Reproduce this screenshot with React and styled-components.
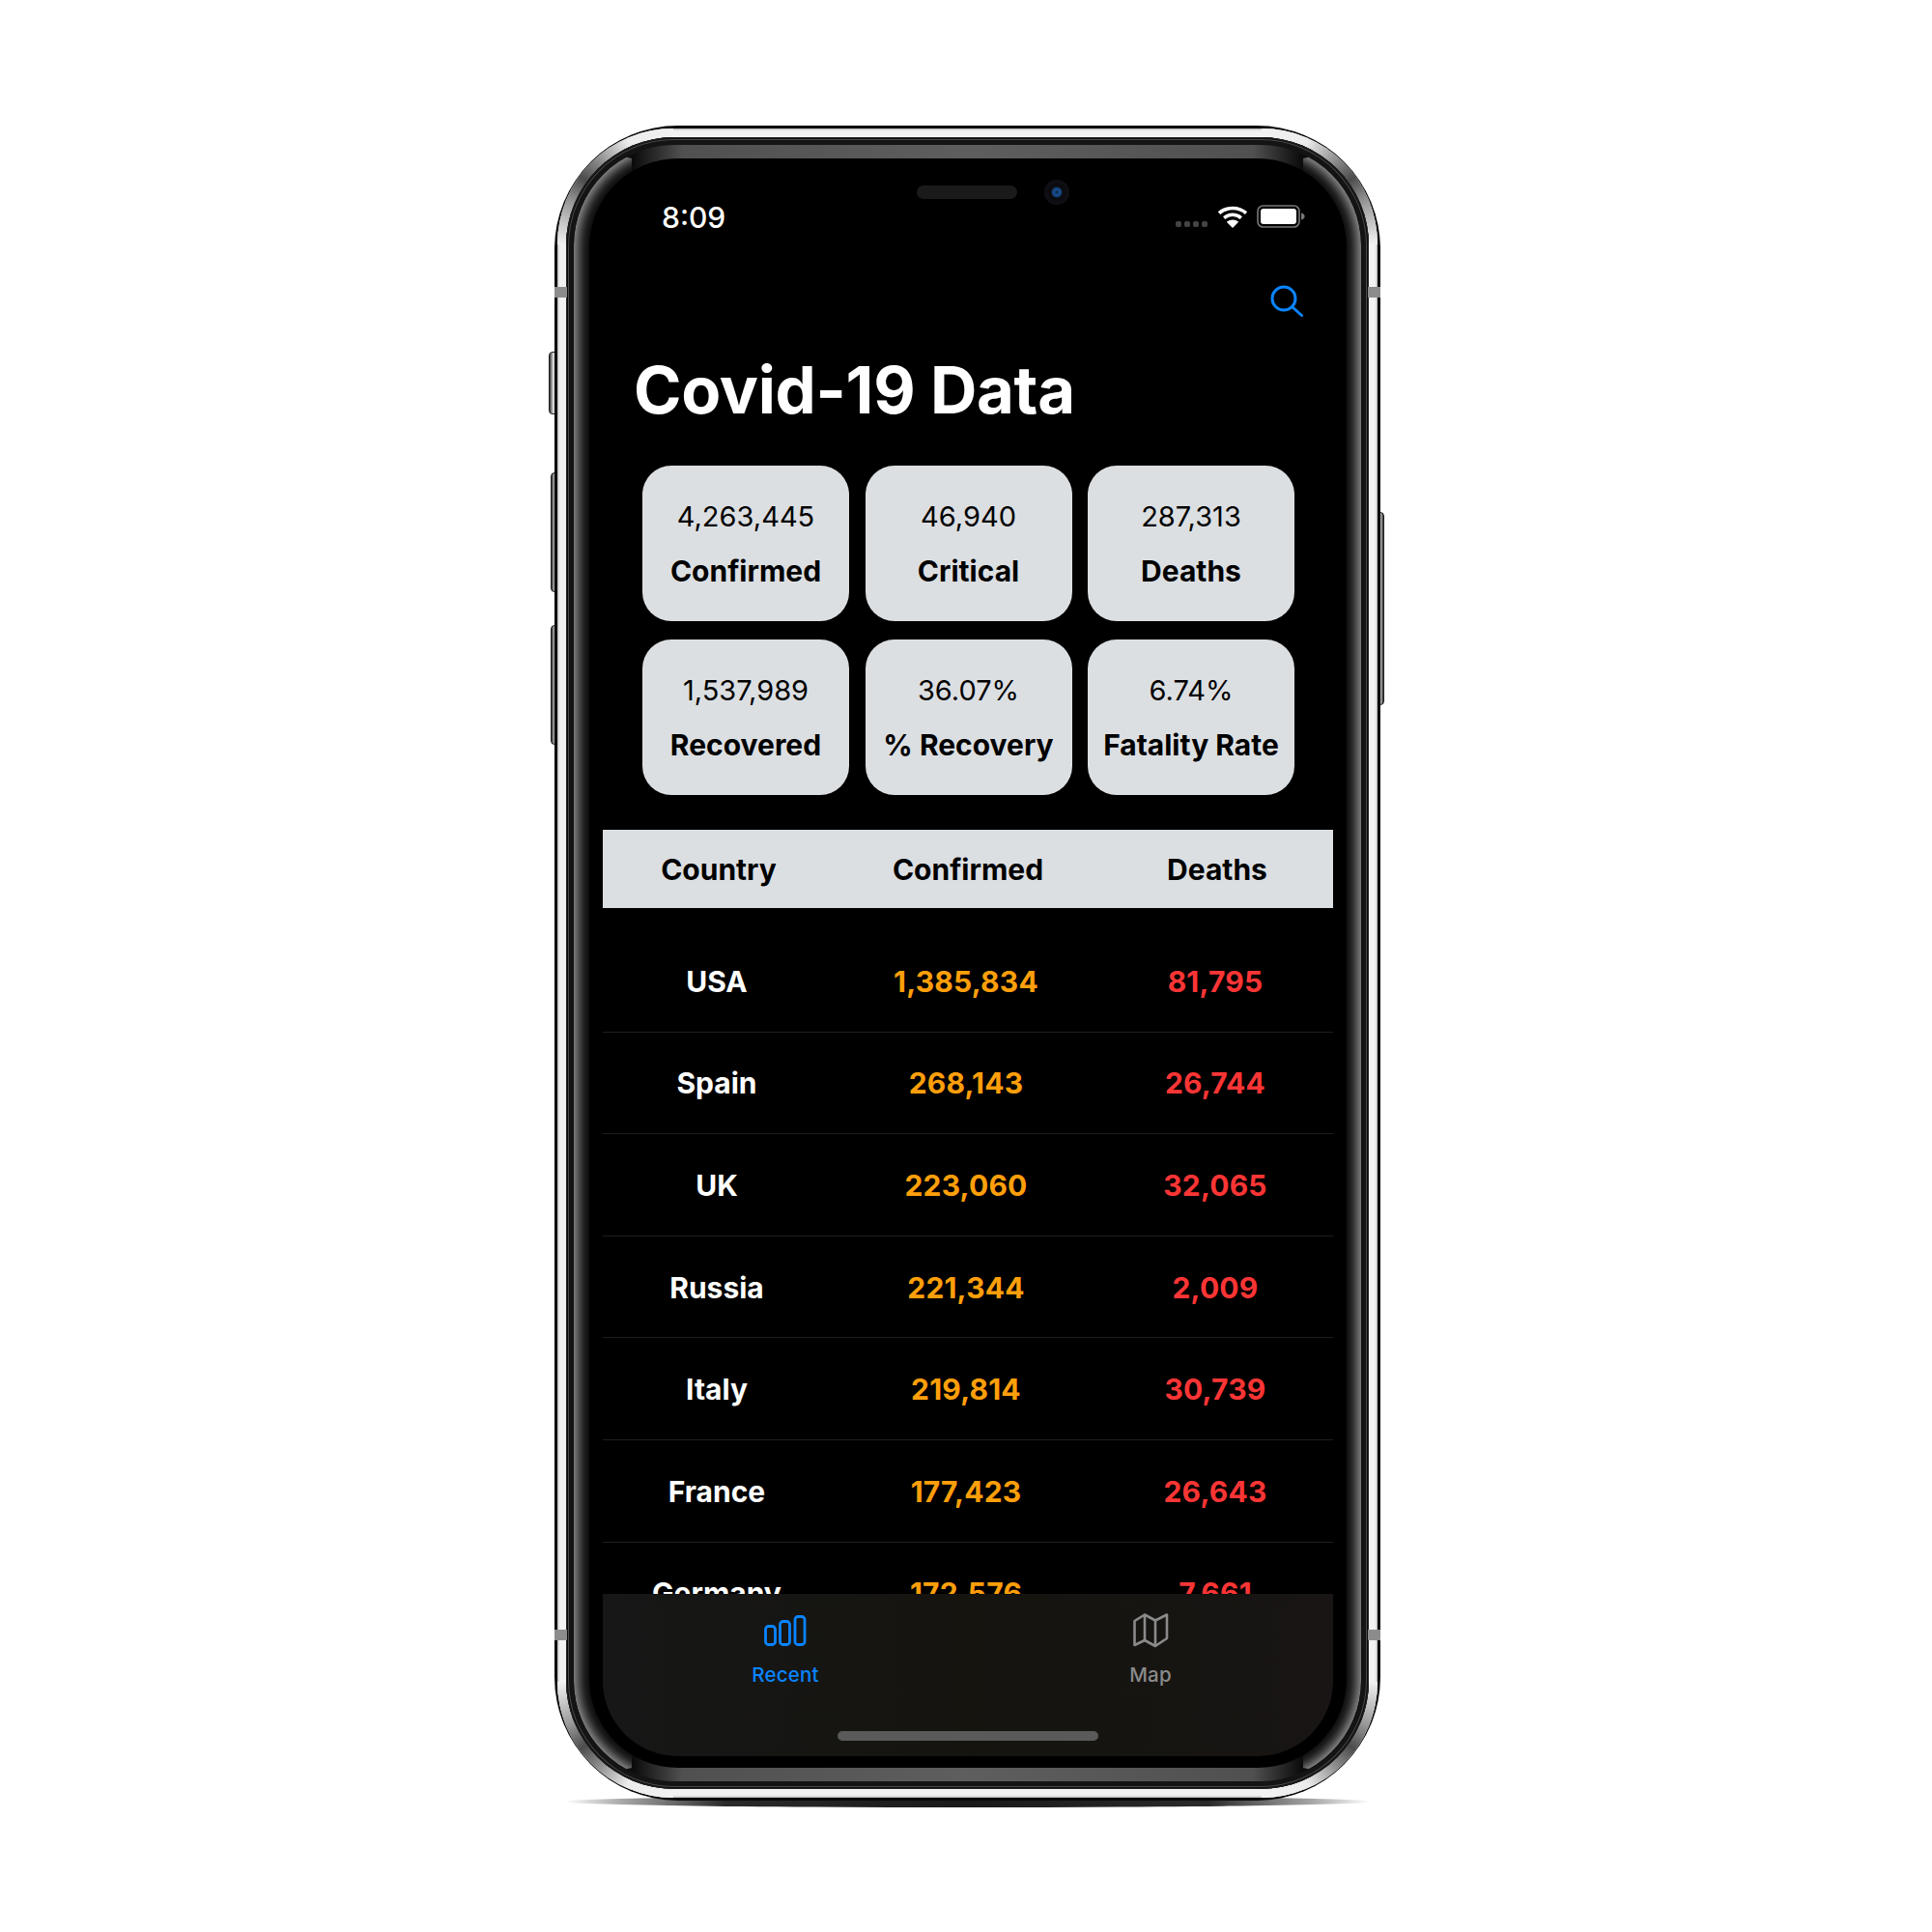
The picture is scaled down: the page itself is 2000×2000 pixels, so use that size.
import React from 'react'
import styled, { createGlobalStyle } from 'styled-components'

const GlobalStyle = createGlobalStyle`
    html, body {
        margin: 0;
        background: #fff;
    }
    body {
        font-family: Inter, 'Liberation Sans', sans-serif;
    }
`

const Page = styled.div`
    width: 2000px;
    height: 2000px;
    padding: 130px 0 0 574px;
    box-sizing: border-box;
`

const Device = styled.div`
    position: relative;
    width: 855px;
    height: 1734px;
    &::after {
        content: '';
        position: absolute;
        left: 10px;
        right: 10px;
        bottom: -7px;
        height: 12px;
        border-radius: 50%;
        background: linear-gradient(
            90deg,
            rgba(150, 150, 150, 0) 0,
            #aaa 7%,
            #2a2a2a 20%,
            #1a1a1a 50%,
            #2a2a2a 80%,
            #aaa 93%,
            rgba(150, 150, 150, 0) 100%
        );
        z-index: 0;
    }
`

const SideButton = styled.div`
    position: absolute;
    top: ${(p) => p.$top}px;
    height: ${(p) => p.$height}px;
    width: 10px;
    box-sizing: border-box;
    ${(p) => (p.$right ? 'right: -4px;' : `left: ${p.$left ?? -4}px;`)}
    border-radius: 4px;
    background: linear-gradient(90deg, #333, #c8c8c8 40%, #ddd 55%, #333);
    border: 1px solid #1c1c1c;
    z-index: 0;
`

const Band = styled.div`
    position: absolute;
    top: ${(p) => p.$top}px;
    ${(p) => (p.$right ? 'right: 0;' : 'left: 0;')}
    width: 13px;
    height: 11px;
    background: #8c8c8c;
    z-index: 3;
`

const Frame = styled.div`
    position: relative;
    z-index: 1;
    width: 100%;
    height: 100%;
    box-sizing: border-box;
    padding: 3px;
    border-radius: 128px;
    background: #0b0b0b;
`

const Steel = styled.div`
    position: relative;
    height: 100%;
    box-sizing: border-box;
    padding: 9px;
    border-radius: 120px;
    overflow: hidden;
    background: #f2f2f2;
    box-shadow: inset 0 0 2px 1px #aaa;
`

// glare on the steel band, drawn for the top left corner and mirrored for the others
const SteelCorner = styled.div`
    position: absolute;
    ${(p) => (p.$flipX ? 'right: 0;' : 'left: 0;')}
    ${(p) => (p.$flipY ? 'bottom: 0;' : 'top: 0;')}
    width: 120px;
    height: 120px;
    transform: scale(${(p) => (p.$flipX ? -1 : 1)}, ${(p) => (p.$flipY ? -1 : 1)});
    background: conic-gradient(
        from 270deg at 120px 120px,
        #f2f2f2 0deg,
        #9a9a9a 22deg,
        #4c4c4c 36deg,
        #8a8a8a 48deg,
        #ececec 66deg,
        #f2f2f2 90deg
    );
`

const Rim = styled.div`
    position: relative;
    z-index: 1;
    height: 100%;
    box-sizing: border-box;
    padding: 8px;
    border-radius: 112px;
    background: #141414;
    box-shadow: inset 0 0 0 1px #222, inset 0 0 0 2px #0c0c0c, inset 0 0 0 3px #4a4a4a;
`

const Glass = styled.div`
    position: relative;
    height: 100%;
    box-sizing: border-box;
    padding: 14px 15px 14px 16px;
    border-radius: 104px;
    overflow: hidden;
    background: linear-gradient(
        90deg,
        #0c0c0c 0,
        #0c0c0c 62px,
        #505050 112px,
        #5e5e5e 50%,
        #505050 calc(100% - 112px),
        #0c0c0c calc(100% - 62px),
        #0c0c0c 100%
    );
    &::before {
        content: '';
        position: absolute;
        inset: 0;
        border-radius: 104px;
        box-shadow: inset 0 0 13px 4px #a6a6a6;
        clip-path: polygon(
            0 0,
            60px 14px,
            60px calc(100% - 14px),
            0 100%,
            0 0,
            100% 0,
            100% 100%,
            calc(100% - 60px) calc(100% - 14px),
            calc(100% - 60px) 14px,
            100% 0,
            0 0
        );
    }
`

const Screen = styled.div`
    position: relative;
    z-index: 1;
    height: 100%;
    box-sizing: border-box;
    padding: 14px 14px 12px;
    border-radius: 92px;
    overflow: hidden;
    background: #000;
    display: flex;
    flex-direction: column;
`

const StatusBar = styled.div`
    height: 117px;
    flex: none;
    display: grid;
    grid-template-columns: 1fr auto 1fr;
    padding: 0 29px 0 61px;
    color: #fff;
`

const Clock = styled.div`
    font-size: 30px;
    font-weight: 500;
    line-height: 36px;
    margin-top: 29px;
`

const Notch = styled.div`
    display: flex;
    align-items: center;
    gap: 28px;
    height: 26px;
    margin: 8px 0 0 20px;
`

const Speaker = styled.div`
    width: 104px;
    height: 14px;
    border-radius: 7px;
    background: #1a1a1a;
`

const Camera = styled.div`
    width: 26px;
    height: 26px;
    border-radius: 50%;
    background: radial-gradient(circle, #0c1a30 0, #1a4f8f 14%, #123a6a 27%, #0a0a0e 32%, #14141a 100%);
`

const StatusIcons = styled.div`
    display: flex;
    justify-content: flex-end;
    align-items: flex-start;
    margin-top: 34px;
`

const SignalDots = styled.div`
    display: flex;
    gap: 3px;
    margin: 17px 10px 0 0;
    & > span {
        width: 6px;
        height: 6px;
        border-radius: 2px;
        background: #444;
    }
`

const Content = styled.div`
    flex: 1;
    min-height: 0;
    display: flex;
    flex-direction: column;
    overflow: hidden;
    border-radius: 0 0 78px 78px;
    position: relative;
`

const NavRow = styled.div`
    flex: none;
    height: 40px;
    display: flex;
    justify-content: flex-end;
    padding-right: 31px;
`

const Title = styled.h1`
    margin: 29px 0 0 32px;
    font-size: 67px;
    line-height: 80px;
    font-weight: 700;
    color: #fff;
    letter-spacing: -0.3px;
    flex: none;
`

const StatGrid = styled.div`
    flex: none;
    display: grid;
    grid-template-columns: repeat(3, 214px);
    grid-auto-rows: 161px;
    column-gap: 16.5px;
    row-gap: 19px;
    margin: 38px 0 0 41px;
`

const StatCard = styled.div`
    background: #dcdfe2;
    border-radius: 30px;
    color: #000;
    text-align: center;
    padding-top: 34px;
    box-sizing: border-box;
`

const StatValue = styled.div`
    font-size: 29px;
    line-height: 38px;
    font-weight: 400;
`

const StatLabel = styled.div`
    font-size: 30px;
    line-height: 38px;
    font-weight: 700;
    margin-top: 18px;
    white-space: nowrap;
`

const TableHeader = styled.div`
    flex: none;
    height: 81px;
    margin-top: 36px;
    background: #dcdfe2;
    display: grid;
    grid-template-columns: repeat(3, 258px);
    justify-content: center;
    align-items: center;
    text-align: center;
    font-size: 30px;
    font-weight: 700;
    color: #000;
`

const Rows = styled.div`
    margin-top: 23px;
    flex: 1;
    min-height: 0;
    overflow: hidden;
`

const Row = styled.div`
    height: 105.6px;
    box-sizing: border-box;
    display: grid;
    grid-template-columns: repeat(3, 258px);
    justify-content: center;
    align-items: center;
    padding: 1px 4px 0 0;
    text-align: center;
    font-size: 30px;
    font-weight: 700;
    border-bottom: 1px solid #1e1e20;
`

const Cell = styled.div`
    color: ${(p) => p.$color};
    letter-spacing: ${(p) => (p.$number ? '0.2px' : '0')};
`

const TabBar = styled.div`
    flex: none;
    height: 168px;
    position: relative;
    background: linear-gradient(90deg, #171717, #15140f 50%, #181514);
    display: grid;
    grid-template-columns: 1fr 1fr;
`

const Tab = styled.div`
    display: flex;
    flex-direction: column;
    align-items: center;
    padding-top: 19px;
    color: ${(p) => (p.$active ? '#0a84ff' : '#8a8a8a')};
`

const TabIcon = styled.div`
    height: 38px;
    display: flex;
    align-items: center;
    justify-content: center;
`

const TabLabel = styled.div`
    font-size: 20.5px;
    line-height: 26px;
    font-weight: 500;
    margin-top: 14px;
    letter-spacing: 0.2px;
`

const HomeIndicator = styled.div`
    position: absolute;
    left: 243px;
    bottom: 16px;
    width: 270px;
    height: 10px;
    border-radius: 5px;
    background: #5a5a5a;
`

const Wifi = () => (
    <svg width="32" height="24" viewBox="0 0 32 24" style={{ marginRight: 9 }}>
        <path fill="none" stroke="#fff" strokeWidth="3.6" d="M2 8.6C9.6 1.8 22.4 1.8 30 8.6" />
        <path fill="none" stroke="#fff" strokeWidth="3.4" d="M7.2 13.6C12.2 9.2 19.8 9.2 24.8 13.6" />
        <path fill="#fff" d="M16 24l-6.2-6.2c3.6-3 8.8-3 12.4 0z" />
    </svg>
)

const Battery = () => (
    <svg width="50" height="24" viewBox="0 0 50 24">
        <rect x="1" y="1" width="43" height="22" rx="5.5" fill="none" stroke="#777" strokeWidth="1.6" />
        <rect x="4" y="4" width="37" height="16" rx="3" fill="#fff" />
        <path d="M46 8.5c2.4.6 3.6 1.8 3.6 3.5s-1.2 2.9-3.6 3.5z" fill="#777" />
    </svg>
)

const SearchIcon = () => (
    <svg width="34" height="34" viewBox="0 0 34 34" fill="none" stroke="#0a84ff" strokeWidth="3" strokeLinecap="round">
        <circle cx="14" cy="14" r="12" />
        <path d="M23 23l9.5 8.5" />
    </svg>
)

const RecentIcon = () => (
    <svg width="44" height="32" viewBox="0 0 44 32" fill="none" stroke="#0a84ff" strokeWidth="2.8">
        <rect x="1.5" y="11.5" width="10" height="19" rx="3" />
        <rect x="16.5" y="6.5" width="10" height="24" rx="3" />
        <rect x="32" y="1.5" width="10" height="29" rx="3" />
    </svg>
)

const MapIcon = () => (
    <svg width="37" height="36" viewBox="0 0 37 36" fill="none" stroke="#8a8a8a" strokeWidth="2.6" strokeLinejoin="round">
        <path d="M1.5 8L12 1.5 23 7.5 35 1.5V26L23 34 12 28 1.5 33z" />
        <path d="M12 1.5V28M23 7.5V34" />
    </svg>
)

const STATS = [
    ['4,263,445', 'Confirmed'],
    ['46,940', 'Critical'],
    ['287,313', 'Deaths'],
    ['1,537,989', 'Recovered'],
    ['36.07%', '% Recovery'],
    ['6.74%', 'Fatality Rate']
]

const COUNTRIES = [
    ['USA', '1,385,834', '81,795'],
    ['Spain', '268,143', '26,744'],
    ['UK', '223,060', '32,065'],
    ['Russia', '221,344', '2,009'],
    ['Italy', '219,814', '30,739'],
    ['France', '177,423', '26,643'],
    ['Germany', '172,576', '7,661']
]

export default function App() {
    return (
        <>
            <GlobalStyle />
            <Page>
                <Device>
                    <SideButton $top={234} $height={65} $left={-6} />
                    <SideButton $top={359} $height={124} />
                    <SideButton $top={517} $height={124} />
                    <SideButton $top={400} $height={200} $right />
                    <Band $top={167} />
                    <Band $top={167} $right />
                    <Band $top={1557} />
                    <Band $top={1557} $right />
                    <Frame>
                        <Steel>
                            <SteelCorner />
                            <SteelCorner $flipX />
                            <SteelCorner $flipY />
                            <SteelCorner $flipX $flipY />
                            <Rim>
                                <Glass>
                                    <Screen>
                                        <StatusBar>
                                            <Clock>8:09</Clock>
                                            <Notch>
                                                <Speaker />
                                                <Camera />
                                            </Notch>
                                            <StatusIcons>
                                                <SignalDots>
                                                    <span />
                                                    <span />
                                                    <span />
                                                    <span />
                                                </SignalDots>
                                                <Wifi />
                                                <Battery />
                                            </StatusIcons>
                                        </StatusBar>
                                        <Content>
                                            <NavRow>
                                                <SearchIcon />
                                            </NavRow>
                                            <Title>Covid-19 Data</Title>
                                            <StatGrid>
                                                {STATS.map(([value, label]) => (
                                                    <StatCard key={label}>
                                                        <StatValue>{value}</StatValue>
                                                        <StatLabel>{label}</StatLabel>
                                                    </StatCard>
                                                ))}
                                            </StatGrid>
                                            <TableHeader>
                                                <div>Country</div>
                                                <div>Confirmed</div>
                                                <div>Deaths</div>
                                            </TableHeader>
                                            <Rows>
                                                {COUNTRIES.map(([name, confirmed, deaths]) => (
                                                    <Row key={name}>
                                                        <Cell $color="#fff">{name}</Cell>
                                                        <Cell $color="#ff9f0a" $number>
                                                            {confirmed}
                                                        </Cell>
                                                        <Cell $color="#fb3535" $number>
                                                            {deaths}
                                                        </Cell>
                                                    </Row>
                                                ))}
                                            </Rows>
                                            <TabBar>
                                                <Tab $active>
                                                    <TabIcon>
                                                        <RecentIcon />
                                                    </TabIcon>
                                                    <TabLabel>Recent</TabLabel>
                                                </Tab>
                                                <Tab>
                                                    <TabIcon>
                                                        <MapIcon />
                                                    </TabIcon>
                                                    <TabLabel>Map</TabLabel>
                                                </Tab>
                                                <HomeIndicator />
                                            </TabBar>
                                        </Content>
                                    </Screen>
                                </Glass>
                            </Rim>
                        </Steel>
                    </Frame>
                </Device>
            </Page>
        </>
    )
}
